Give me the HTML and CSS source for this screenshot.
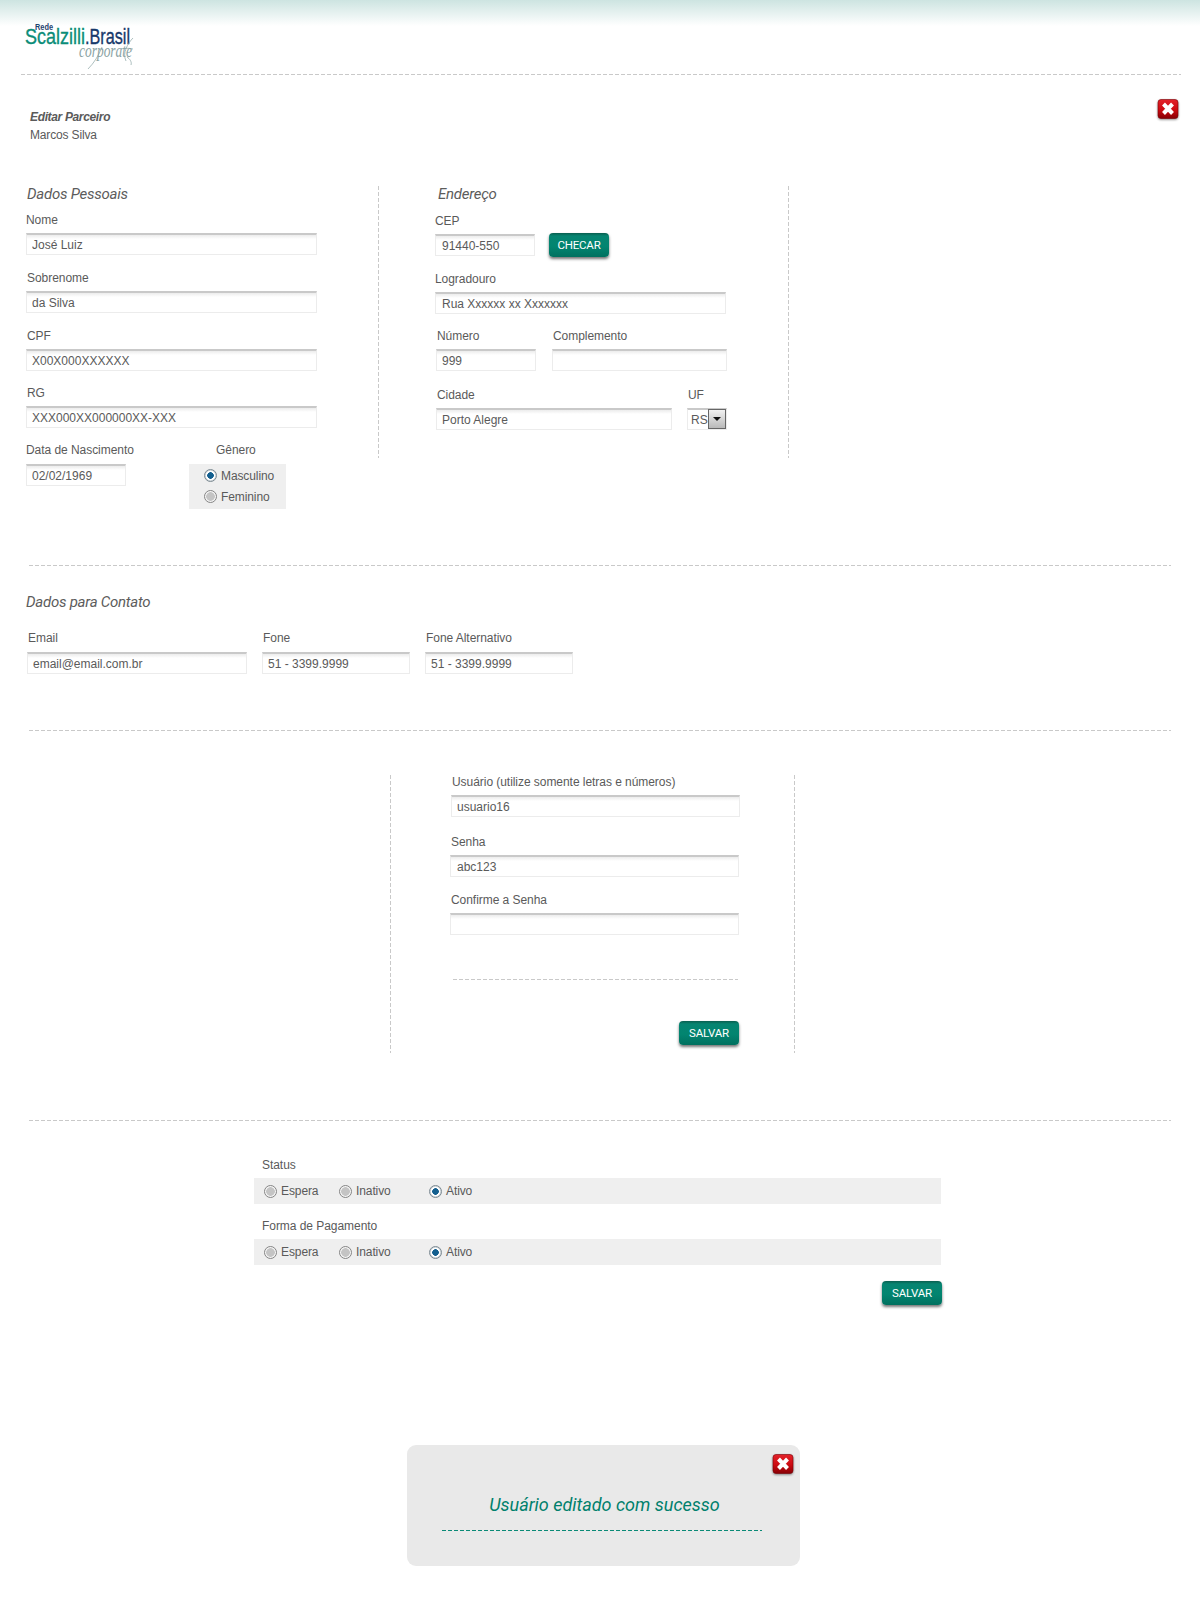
FILE: index.html
```html
<!DOCTYPE html>
<html lang="pt-BR">
<head>
<meta charset="utf-8">
<title>Editar Parceiro</title>
<link rel="stylesheet" href="styles.css">
</head>
<body>
<header class="top">
  <svg class="logo" width="112" height="52" viewBox="0 0 112 52" role="img" aria-label="Rede Scalzilli Brasil corporate">
    <text x="10" y="9" class="logo-rede" textLength="18" lengthAdjust="spacingAndGlyphs">Rede</text>
    <text x="0" y="23" class="logo-scal" textLength="60" lengthAdjust="spacingAndGlyphs">Scalzilli</text>
    <text x="60" y="23" class="logo-bras" textLength="45" lengthAdjust="spacingAndGlyphs">.Brasil</text>
    <text x="54" y="36" class="logo-corp" textLength="53" lengthAdjust="spacingAndGlyphs">corporate</text>
    <path class="logo-swash" d="M63 48 C69 42 74 34 77 26 M101 40 C97 32 103 22 108 17 M96 28 C100 27 104 27 108 28 M102 36 C105 38 107 41 106 44" fill="none"/>
  </svg>
</header>
<div class="dash dash-top"></div>

<div class="page-head">
  <div class="page-title">
    <strong>Editar Parceiro</strong>
    <span>Marcos Silva</span>
  </div>
  <button class="close" type="button" aria-label="Fechar">
    <svg width="22" height="21" viewBox="0 0 22 21"><defs><linearGradient id="r1" x1="0" y1="0" x2="0" y2="1"><stop offset="0" stop-color="#e3222a"/><stop offset=".55" stop-color="#cc0a10"/><stop offset="1" stop-color="#860005"/></linearGradient></defs><rect x="1" y="0.5" width="20" height="19" rx="3" fill="url(#r1)" stroke="#7c0005" stroke-width=".6"/><path d="M6.5 5 L15.5 14.5 M15.5 5 L6.5 14.5" stroke="#fff" stroke-width="4" fill="none"/></svg>
  </button>
</div>

<section class="personal">
  <div class="col-a">
    <h2 class="sec-title">Dados Pessoais</h2>
    <div class="field first"><label class="lbl">Nome</label><input class="inp w291" value="José Luiz"></div>
    <div class="field"><label class="lbl nudge">Sobrenome</label><input class="inp w291" value="da Silva"></div>
    <div class="field"><label class="lbl nudge">CPF</label><input class="inp w291" value="X00X000XXXXXX"></div>
    <div class="field tight"><label class="lbl nudge">RG</label><input class="inp w291" value="XXX000XX000000XX-XXX"></div>
    <div class="birth">
      <div class="field-plain birth-date"><label class="lbl">Data de Nascimento</label><input class="inp w100" value="02/02/1969"></div>
      <div class="gender">
        <label class="lbl gender-lbl">Gênero</label>
        <div class="gender-box">
          <label class="opt"><input type="radio" class="radio" name="g" checked>Masculino</label>
          <label class="opt"><input type="radio" class="radio" name="g">Feminino</label>
        </div>
      </div>
    </div>
  </div>
  <div class="vline v272"></div>
  <div class="col-b">
    <h2 class="sec-title sec-b">Endereço</h2>
    <div class="field first-b"><label class="lbl">CEP</label>
      <div class="cep-row"><input class="inp w100" value="91440-550"><button class="btn btn-check" type="button">CHECAR</button></div>
    </div>
    <div class="field addr"><label class="lbl nudge">Logradouro</label><input class="inp w291" value="Rua Xxxxxx xx Xxxxxxx"></div>
    <div class="addr-row num-row">
      <div class="field-plain"><label class="lbl nudge">Número</label><input class="inp w100" value="999"></div>
      <div class="field-plain"><label class="lbl nudge">Complemento</label><input class="inp w175" value=""></div>
    </div>
    <div class="addr-row city-row">
      <div class="field-plain"><label class="lbl nudge">Cidade</label><input class="inp w236" value="Porto Alegre"></div>
      <div class="field-plain"><label class="lbl nudge">UF</label>
        <div class="select"><span>RS</span><i class="arrow"></i></div>
      </div>
    </div>
  </div>
  <div class="vline v272"></div>
</section>

<div class="dash dash-wide d-contact"></div>

<section class="contact">
  <h2 class="sec-title">Dados para Contato</h2>
  <div class="contact-row">
    <div class="field-plain"><label class="lbl nudge">Email</label><input class="inp w220" value="email@email.com.br"></div>
    <div class="field-plain"><label class="lbl nudge">Fone</label><input class="inp w148" value="51 - 3399.9999"></div>
    <div class="field-plain"><label class="lbl nudge">Fone Alternativo</label><input class="inp w148" value="51 - 3399.9999"></div>
  </div>
</section>

<div class="dash dash-wide d-user"></div>

<section class="user">
  <div class="vline v278"></div>
  <div class="user-col">
    <div class="field-plain shift"><label class="lbl nudge">Usuário (utilize somente letras e números)</label><input class="inp w289" value="usuario16"></div>
    <div class="field-plain user-gap"><label class="lbl nudge">Senha</label><input class="inp w289" value="abc123"></div>
    <div class="field-plain user-gap2"><label class="lbl nudge">Confirme a Senha</label><input class="inp w289" value=""></div>
    <div class="dash dash-inner"></div>
    <div class="btn-line"><button class="btn" type="button">SALVAR</button></div>
  </div>
  <div class="vline v278"></div>
</section>

<div class="dash dash-wide d-status"></div>

<section class="status">
  <label class="lbl status-lbl">Status</label>
  <div class="status-box">
    <label class="opt o1"><input type="radio" class="radio" name="s">Espera</label>
    <label class="opt o2"><input type="radio" class="radio" name="s">Inativo</label>
    <label class="opt"><input type="radio" class="radio" name="s" checked>Ativo</label>
  </div>
  <label class="lbl status-lbl status-next">Forma de Pagamento</label>
  <div class="status-box">
    <label class="opt o1"><input type="radio" class="radio" name="p">Espera</label>
    <label class="opt o2"><input type="radio" class="radio" name="p">Inativo</label>
    <label class="opt"><input type="radio" class="radio" name="p" checked>Ativo</label>
  </div>
  <div class="status-save"><button class="btn" type="button">SALVAR</button></div>
</section>

<aside class="toast">
  <button class="close" type="button" aria-label="Fechar">
    <svg width="22" height="21" viewBox="0 0 22 21"><defs><linearGradient id="r2" x1="0" y1="0" x2="0" y2="1"><stop offset="0" stop-color="#e3222a"/><stop offset=".55" stop-color="#cc0a10"/><stop offset="1" stop-color="#860005"/></linearGradient></defs><rect x="1" y="0.5" width="20" height="19" rx="3" fill="url(#r2)" stroke="#7c0005" stroke-width=".6"/><path d="M6.5 5 L15.5 14.5 M15.5 5 L6.5 14.5" stroke="#fff" stroke-width="4" fill="none"/></svg>
  </button>
  <p class="toast-msg">Usuário editado com sucesso</p>
  <div class="toast-dash"></div>
</aside>
</body>
</html>
```
FILE: styles.css
```css
* { box-sizing: border-box; }
html, body { margin: 0; padding: 0; background: #fff; }
body {
  width: 1200px;
  min-height: 1600px;
  font-family: "Liberation Sans", Arial, sans-serif;
  font-size: 12px;
  color: #5a5a5a;
}

/* header */
.top {
  height: 74px;
  padding: 21px 0 0 25px;
  background: linear-gradient(#cde4e1, #fff) no-repeat;
  background-size: 100% 26px;
}
.logo { display: block; overflow: visible; }
.logo text { font-family: "Liberation Sans", Arial, sans-serif; }
.logo .logo-rede { font-size: 9px; font-weight: 700; fill: #1f4470; }
.logo .logo-scal { font-size: 22px; fill: #0b8d78; stroke: #0b8d78; stroke-width: .35px; }
.logo .logo-bras { font-size: 22px; fill: #17396b; stroke: #17396b; stroke-width: .35px; }
.logo .logo-corp { font-family: "Liberation Serif", serif; font-style: italic; font-size: 18px; fill: #8ba3a4; }
.logo-swash { stroke: #8aa3a4; stroke-width: .7; }

/* dashes */
.dash {
  height: 1px;
  background: repeating-linear-gradient(90deg, #c9c9c9 0 4px, transparent 4px 6px);
}
.dash-top { width: 1160px; margin-left: 21px; }
.dash-wide { width: 1142px; margin-left: 29px; }
.d-contact { margin-top: 56px; }
.d-user { margin-top: 56px; }
.d-status { margin-top: 67px; }
.vline {
  width: 1px;
  flex: none;
  background: repeating-linear-gradient(180deg, #c9c9c9 0 4px, transparent 4px 6px);
}
.v272 { height: 272px; }
.v278 { height: 278px; }

/* page head */
.page-head {
  display: flex;
  justify-content: space-between;
  align-items: flex-start;
  margin-top: 24px;
  padding: 0 21px 0 30px;
}
.page-title { padding-top: 9px; display: flex; flex-direction: column; line-height: 18px; }
.page-title strong { font-style: italic; font-weight: 700; letter-spacing: -.35px; }
.page-title span { letter-spacing: -.15px; }
.close {
  display: block;
  width: 22px;
  height: 21px;
  padding: 0;
  border: 0;
  background: none;
  filter: drop-shadow(0 1px 1px rgba(0,0,0,.45));
}
.close svg { display: block; }

/* type */
.sec-title {
  margin: 0;
  font-family: Roboto, "Liberation Sans", sans-serif;
  font-size: 15px;
  line-height: 18px;
  font-weight: 400;
  font-style: italic;
  color: #5c5c5c;
  letter-spacing: -.25px;
}
.lbl { display: block; height: 14px; line-height: 14px; margin-bottom: 6px; letter-spacing: -.05px; white-space: nowrap; }
.nudge { margin-left: 1px; }

/* inputs */
.inp {
  display: block;
  height: 22px;
  padding: 1px 0 0 5px;
  border: 1px solid #ececec;
  border-top: 2px solid #c9c9c9;
  background: linear-gradient(#ececec, #fff 4px);
  font: 12px "Liberation Sans", Arial, sans-serif;
  color: #5a5a5a;
  outline: 0;
  border-radius: 0;
}
.w100 { width: 100px; }
.w148 { width: 148px; }
.w175 { width: 175px; }
.w220 { width: 220px; }
.w236 { width: 236px; }
.w289 { width: 289px; }
.w291 { width: 291px; }

/* personal */
.personal { display: flex; align-items: flex-start; margin-top: 42px; }
.col-a { width: 378px; flex: none; padding-left: 26px; }
.col-a .sec-title { margin-left: 1px; margin-top: -1px; }
.field { margin-top: 16px; }
.field.first { margin-top: 10px; }
.field.tight { margin-top: 15px; }
.birth { display: flex; margin-top: 15px; }
.birth-date { width: 100px; flex: none; }
.gender { margin-left: 63px; width: 97px; }
.gender-lbl { padding-left: 27px; margin-bottom: 7px; }
.birth .field-plain .lbl { margin-bottom: 7px; }
.gender-box {
  height: 45px;
  padding: 1px 0 0 15px;
  background: #efefef;
  display: flex;
  flex-direction: column;
}
.opt { display: flex; align-items: center; height: 21px; letter-spacing: -.1px; white-space: nowrap; }
.radio {
  appearance: none;
  -webkit-appearance: none;
  width: 13px;
  height: 13px;
  margin: 0 4px 0 0;
  flex: none;
  border-radius: 50%;
  border: 1px solid #858585;
  background: radial-gradient(circle at 50% 50%, #c4c4c4 0 4px, #f4f4f4 4.6px);
}
.radio:checked {
  border-color: #7d8b93;
  background: radial-gradient(circle at 50% 50%, #135f8f 0 3px, #fff 3.6px 4.4px, #d5dade 5px);
}

.col-b { width: 409px; flex: none; padding-left: 56px; }
.sec-b { margin-left: 3px; margin-top: -1px; }
.field.first-b { margin-top: 11px; }
.first-b .lbl { margin-bottom: 6px; }
.first-b .inp, .addr .inp, .user-gap .inp { padding-left: 6px; }
.cep-row { display: flex; align-items: flex-start; }
.btn {
  display: block;
  width: 60px;
  height: 24px;
  padding: 0;
  border: 0;
  border-radius: 4px;
  background: linear-gradient(#0a5f50 0, #068471 3px, #028570 55%, #00705f 100%);
  box-shadow: 0 2px 3px rgba(0,0,0,.55);
  color: #fff;
  font: 400 11.5px Roboto, "Liberation Sans", sans-serif;
  letter-spacing: -.2px;
}
.btn-check { margin: -1px 0 0 14px; }
.field.addr { margin-top: 15px; }
.field.addr .lbl { margin-bottom: 6px; margin-left: 0; }
.addr-row { display: flex; margin-left: 1px; }
.num-row { margin-top: 15px; gap: 16px; }
.num-row .lbl { margin-bottom: 6px; }
.city-row { margin-top: 17px; gap: 15px; }
.select {
  width: 40px;
  height: 22px;
  display: flex;
  align-items: center;
  justify-content: space-between;
  padding-left: 3px;
  border: 1px solid #ececec;
  border-top: 2px solid #c9c9c9;
  background: #fff;
}
.arrow {
  position: relative;
  display: block;
  width: 18px;
  height: 20px;
  margin-top: -1px;
  border: 1px solid #666;
  background: linear-gradient(#f2f2f2, #b9b9b9);
}
.arrow::after {
  content: "";
  position: absolute;
  left: 4px;
  top: 7px;
  border-left: 4px solid transparent;
  border-right: 4px solid transparent;
  border-top: 4px solid #111;
}

/* contact */
.contact { padding-left: 26px; margin-top: 27px; }
.contact-row { display: flex; margin: 20px 0 0 1px; gap: 15px; }
.contact-row .lbl { margin-bottom: 7px; }

/* user */
.user { display: flex; align-items: flex-start; margin: 44px 0 0 390px; }
.user-col { width: 403px; flex: none; padding: 0 0 0 59px; }
.shift { margin-left: 1px; }
.user-gap { margin-top: 18px; }
.user-gap2 { margin-top: 16px; }
.dash-inner { width: 285px; margin: 44px 0 0 3px; }
.btn-line { width: 289px; display: flex; justify-content: flex-end; margin-top: 41px; }

/* status */
.status { width: 687px; margin: 37px 0 0 254px; }
.status-lbl { padding-left: 8px; margin-bottom: 6px; }
.status-next { margin-top: 15px; }
.status-box {
  height: 26px;
  padding-left: 10px;
  display: flex;
  align-items: center;
  background: #efefef;
}
.o1 { width: 75px; }
.o2 { width: 90px; }
.status-save { display: flex; justify-content: flex-end; margin: 16px -1px 0 0; }

/* toast */
.toast {
  width: 393px;
  height: 121px;
  margin: 140px 0 0 407px;
  padding: 9px 6px 0 0;
  border-radius: 9px;
  background: #e9e9e9;
  display: flex;
  flex-direction: column;
  align-items: flex-end;
}
.toast-msg {
  width: 100%;
  margin: 18px 0 0;
  padding-left: 8px;
  text-align: center;
  font-family: Roboto, "Liberation Sans", sans-serif;
  font-size: 18px;
  line-height: 24px;
  font-style: italic;
  color: #00806c;
}
.toast-dash {
  align-self: flex-start;
  width: 320px;
  height: 1px;
  margin: 13px 0 0 35px;
  background: repeating-linear-gradient(90deg, #0a8a76 0 4px, transparent 4px 6px);
}
```
